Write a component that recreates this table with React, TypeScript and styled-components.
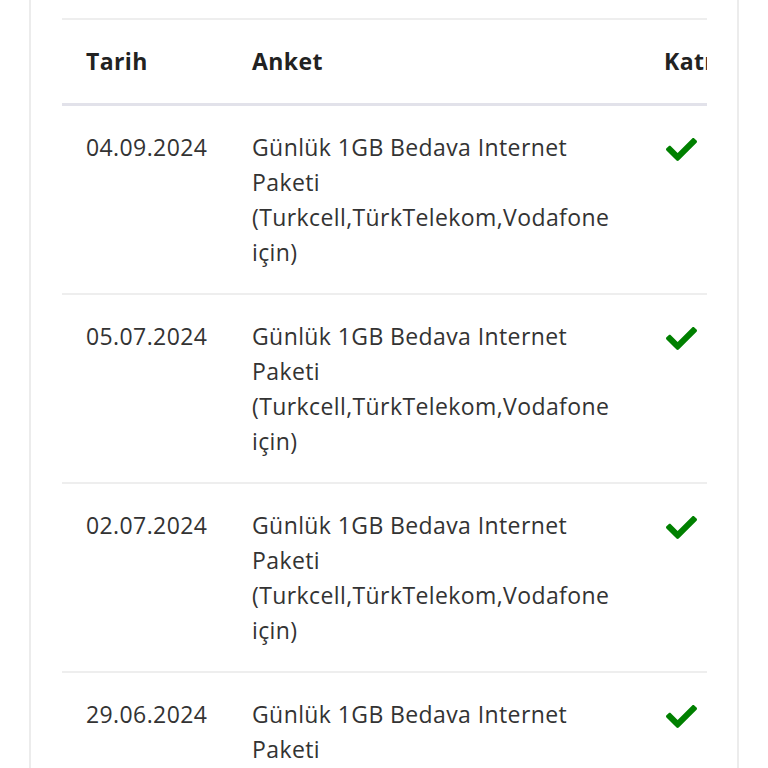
import React from 'react'
import styled, { createGlobalStyle } from 'styled-components'
import { FaCheck } from 'react-icons/fa'

const GlobalStyle = createGlobalStyle`
	html, body {
		margin: 0;
		padding: 0;
		background: #ffffff;
		font-family: 'Open Sans', 'Noto Sans', sans-serif;
	}
`

type Survey = {
	date: string
	title: string
	joined: boolean
}

const surveys: Survey[] = [
	{ date: '04.09.2024', title: 'Günlük 1GB Bedava Internet Paketi (Turkcell,TürkTelekom,Vodafone için)', joined: true },
	{ date: '05.07.2024', title: 'Günlük 1GB Bedava Internet Paketi (Turkcell,TürkTelekom,Vodafone için)', joined: true },
	{ date: '02.07.2024', title: 'Günlük 1GB Bedava Internet Paketi (Turkcell,TürkTelekom,Vodafone için)', joined: true },
	{ date: '29.06.2024', title: 'Günlük 1GB Bedava Internet Paketi (Turkcell,TürkTelekom,Vodafone için)', joined: true }
]

const App = () => {
	return (
		<>
			<GlobalStyle />
			<Page>
				<Card>
					<TableScroll>
						<Table>
							<colgroup>
								<col style={{ width: 166 }} />
								<col style={{ width: 412 }} />
								<col style={{ width: 220 }} />
							</colgroup>
							<thead>
								<tr>
									<HeadCell>Tarih</HeadCell>
									<HeadCell>Anket</HeadCell>
									<HeadCell>Katılım</HeadCell>
								</tr>
							</thead>
							<tbody>
								{surveys.map((s, i) => (
									<Row key={i}>
										<Cell>{s.date}</Cell>
										<Cell>{s.title}</Cell>
										<Cell>
											{s.joined && (
												<CheckWrap>
													<FaCheck size={31} color="#008000" />
												</CheckWrap>
											)}
										</Cell>
									</Row>
								))}
							</tbody>
						</Table>
					</TableScroll>
				</Card>
			</Page>
		</>
	)
}

export default App

const Page = styled.div`
	padding: 0 29px;
	height: 768px;
	overflow: hidden;
	box-sizing: border-box;
`

const Card = styled.div`
	border-left: 2px solid #ececec;
	border-right: 2px solid #ececec;
	padding: 18px 30px 0 31px;
	min-height: 768px;
	box-sizing: border-box;
`

const TableScroll = styled.div`
	overflow: hidden;
	width: 100%;
`

const Table = styled.table`
	table-layout: fixed;
	width: 798px;
	border-collapse: collapse;
	border-top: 2px solid #eeeeee;
	font-size: 23px;
	letter-spacing: 0.4px;
	line-height: 35px;
	color: #333333;
`

const HeadCell = styled.th`
	text-align: left;
	vertical-align: top;
	font-weight: 700;
	color: #222222;
	padding: 24px;
	border-bottom: 3px solid #e2e2ea;
	white-space: nowrap;
`

const Row = styled.tr`
	border-bottom: 2px solid #eeeeee;
`

const Cell = styled.td`
	vertical-align: top;
	padding: 24px 24px 23px 24px;
`

const CheckWrap = styled.span`
	display: inline-flex;
	padding-top: 4px;
	margin-left: 2px;
`
